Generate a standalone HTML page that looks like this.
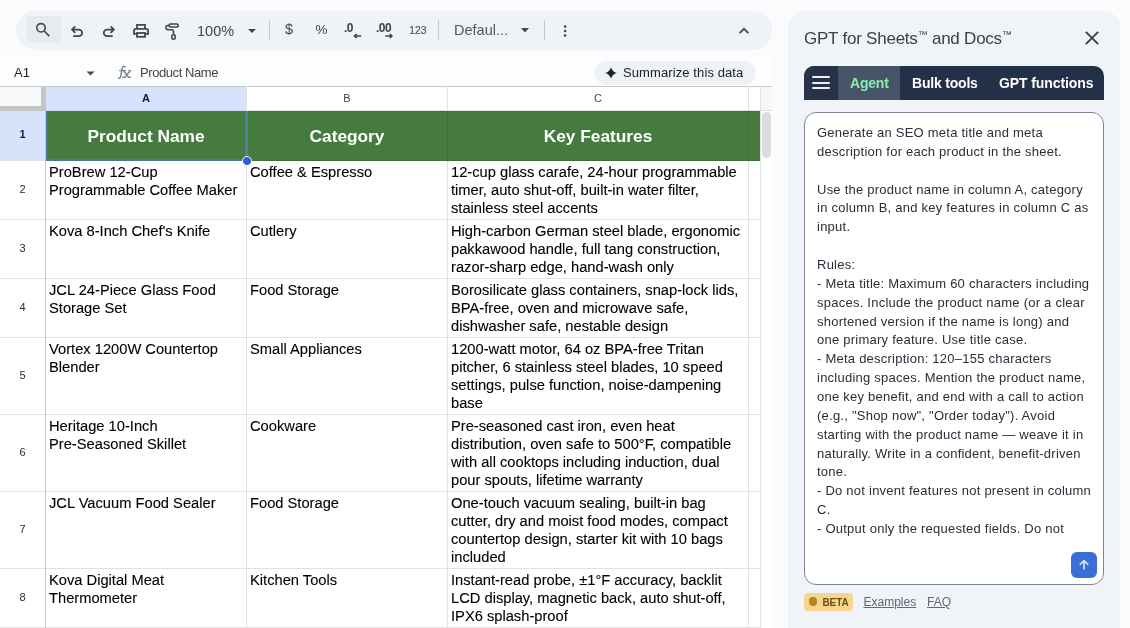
<!DOCTYPE html>
<html><head><meta charset="utf-8">
<style>
*{margin:0;padding:0;box-sizing:border-box}
html,body{-webkit-font-smoothing:antialiased;width:1130px;height:628px;overflow:hidden;background:#f9fbfd;font-family:"Liberation Sans",sans-serif;position:relative}
.abs{position:absolute}
#tb{left:16px;top:11px;width:756px;height:39px;border-radius:20px;background:#eff2f6}
#srch{left:27px;top:16px;width:34px;height:27px;background:#e7ebf1;border-radius:4px}
.tt{position:absolute;color:#444746;font-size:15px;line-height:20px;white-space:pre}
.sep{position:absolute;width:1px;background:#c7c7c7;top:20px;height:20px}
#fbar{left:0;top:56px;width:772px;height:30px;background:#fcfdfe}
#chip{left:595px;top:61px;width:161px;height:24px;border-radius:12px;background:#eef1f5}
#grid{left:0;top:86px;width:772px;height:542px;background:#fff;overflow:hidden}
.hl{position:absolute;left:0;height:1px;background:#e1e1e1}
.vl{position:absolute;top:0;width:1px;background:#e1e1e1}
.cell{position:absolute;font-size:14.7px;line-height:18px;color:#000;-webkit-text-stroke:0.1px #000;white-space:pre;padding:2px 0 0 3px}
.rh{position:absolute;left:0;width:45px;font-size:11px;color:#444;text-align:center}
.ch{position:absolute;top:1px;height:23px;font-size:11px;color:#444;text-align:center;line-height:23px}
.hdr{position:absolute;top:25px;height:50px;color:#fff;font-weight:bold;font-size:17.3px;text-align:center;line-height:51px}
#sb{left:788px;top:11px;width:332px;height:640px;border-radius:16px;background:#f0f4f9}
#box{left:804px;top:112px;width:300px;height:473px;border:1px solid #7d8494;border-radius:12px;background:#fff}
#txt{left:817px;top:124px;font-size:13px;line-height:18.857px;color:#2a2e39;white-space:pre;letter-spacing:0.24px}

</style></head><body>
<div id="root" style="position:absolute;left:0;top:0;width:1130px;height:628px;will-change:transform">
<div id="tb" class="abs"></div>
<div id="srch" class="abs"></div>
<div class="sep" style="left:269px"></div>
<div class="sep" style="left:438px"></div>
<div class="sep" style="left:544px"></div>
<div class="tt" style="left:197px;top:20.5px;font-size:14.5px">100%</div>
<div class="tt" style="left:285px;top:19px;font-size:14.5px">$</div>
<div class="tt" style="left:315.5px;top:20px;font-size:13.5px">%</div>
<div class="tt" style="left:344px;top:18px;font-size:12px;font-weight:bold;letter-spacing:-0.5px;color:#3c4043">.0</div>
<div class="tt" style="left:376px;top:18px;font-size:12px;font-weight:bold;letter-spacing:-0.5px;color:#3c4043">.00</div>
<div class="tt" style="left:409px;top:20px;font-size:11px;letter-spacing:-0.4px">123</div>
<div class="tt" style="left:454px;top:19.5px;font-size:14.5px;color:#53575b">Defaul...</div>
<svg class="abs" style="left:0;top:0" width="790" height="56" viewBox="0 0 790 56" fill="none" stroke="#444746" stroke-width="1.8" stroke-linecap="butt" stroke-linejoin="miter">
<circle cx="41" cy="27.8" r="4.2" stroke-width="1.6"/>
<path d="M44.2 31 L49.3 36.1" stroke-width="1.6"/>
<path d="M75.2 26.4 L72.1 29.6 L75.2 32.8 M72.1 29.6 H78.8 A3.3 3.3 0 0 1 78.8 36.2 H73.2"/>
<g transform="translate(185.9 0) scale(-1 1)"><path d="M75.2 26.4 L72.1 29.6 L75.2 32.8 M72.1 29.6 H78.8 A3.3 3.3 0 0 1 78.8 36.2 H73.2"/></g>
<path d="M137 28.3 V24.9 H145 V28.3"/>
<path d="M136.9 33.9 H134 V30.3 A2 2 0 0 1 136 28.8 H146 A2 2 0 0 1 148.1 30.3 V33.9 H145.1"/>
<rect x="137" y="33" width="8" height="3.8"/>
<rect x="169" y="24" width="9.3" height="3" rx="1.5" stroke-width="1.6"/>
<path d="M169 25.5 H167.5 A1.6 1.6 0 0 0 165.9 27.1 V28.1 A1.6 1.6 0 0 0 167.5 29.7 H172 A1.5 1.5 0 0 1 173.5 31.2 V34.6" stroke-width="1.6"/>
<rect x="171.8" y="34.8" width="3.4" height="4.3" rx="1.7" stroke-width="1.6"/>
<path d="M739.6 33.2 L744 28.8 L748.4 33.2" stroke-width="1.8"/>
<path d="M248 29 H256 L252 33 Z" fill="#444746" stroke="none"/>
<path d="M521 28 H529 L525 32.5 Z" fill="#444746" stroke="none"/>
<circle cx="565.1" cy="26.5" r="1.3" fill="#444746" stroke="none"/>
<circle cx="565.1" cy="31" r="1.3" fill="#444746" stroke="none"/>
<circle cx="565.1" cy="35.5" r="1.3" fill="#444746" stroke="none"/>
<path d="M355 36 H361.2 M356.6 34 L354.4 36 L356.6 38" stroke-width="1.6"/>
<path d="M385.3 36 H391.6 M389.7 34 L391.9 36 L389.7 38" stroke-width="1.6"/>
</svg>
<div id="fbar" class="abs"></div>
<svg class="abs" style="left:86px;top:71px" width="9" height="5" viewBox="0 0 9 5"><path d="M0.5 0.5 H8.5 L4.5 4.6 Z" fill="#444746"/></svg>
<div class="tt" style="left:14px;top:62.5px;font-size:13px;color:#1f1f1f">A1</div>
<svg class="abs" style="left:110px;top:60px" width="26" height="24" viewBox="110 60 26 24" fill="none" stroke="#80868b"><path d="M125.4 67.6 Q124.8 66 123.4 66.4 Q122.3 66.9 121.9 69.4 L120.7 76.4 Q120.3 78.7 117.9 78.2" stroke-width="1.5"/><path d="M119.2 70.5 H125.9" stroke-width="1.3"/><path d="M123.3 70.5 L128.9 77.4 M130.4 70.5 L124.6 77.4" stroke-width="1.5"/><path d="M122.4 70.5 H125.4 M128.4 70.5 H131.1 M122.2 77.4 H125.4 M127.7 77.4 H131" stroke-width="1.2"/></svg>
<div class="tt" style="left:140px;top:63px;font-size:13px;letter-spacing:-0.42px;color:#444746">Product Name</div>
<div id="chip" class="abs"></div>
<svg class="abs" style="left:604px;top:66px" width="14" height="14" viewBox="0 0 14 14"><path d="M7 1.2 Q8.2 5.8 12.8 7 Q8.2 8.2 7 12.8 Q5.8 8.2 1.2 7 Q5.8 5.8 7 1.2Z" fill="#1f1f1f"/></svg>
<div class="tt" style="left:623px;top:63px;font-size:13px;letter-spacing:0.1px;color:#1f1f1f">Summarize this data</div>

<div id="grid" class="abs">
<div class="abs" style="left:0;top:1px;width:41px;height:19px;background:#f8f9fa"></div>
<div class="abs" style="left:41px;top:0;width:4px;height:24px;background:#c4c7c5"></div>
<div class="abs" style="left:0;top:20px;width:45px;height:4px;background:#c4c7c5"></div>
<div class="abs" style="left:46px;top:1px;width:200px;height:23px;background:#d7e2fb"></div>
<div class="abs" style="left:0;top:25px;width:45px;height:49px;background:#d7e2fb"></div>
<div class="abs" style="left:46px;top:25px;width:714px;height:50px;background:#457b3f"></div>
<div class="hl" style="top:0;width:772px;background:#c7c7c7"></div>
<div class="hl" style="top:74px;width:45px"></div>
<div class="hl" style="top:133px;width:760px"></div>
<div class="hl" style="top:192px;width:760px"></div>
<div class="hl" style="top:251px;width:760px"></div>
<div class="hl" style="top:328px;width:760px"></div>
<div class="hl" style="top:405px;width:760px"></div>
<div class="hl" style="top:482px;width:760px"></div>
<div class="hl" style="top:541px;width:760px"></div>
<div class="hl" style="top:74px;left:46px;width:714px;background:#3c6e37"></div>
<div class="hl" style="top:24px;left:0;width:46px;background:#c4c7c5"></div>
<div class="hl" style="top:24px;left:46px;width:200px;background:#c9d9f7"></div>
<div class="hl" style="top:24px;left:246px;width:514px;background:#e3e9e2"></div>
<div class="hl" style="top:25px;left:46px;width:714px;background:#3f6d3b"></div>
<div class="vl" style="left:246px;height:542px"></div>
<div class="vl" style="left:447px;height:542px"></div>
<div class="vl" style="left:748px;height:542px"></div>
<div class="vl" style="left:760px;height:542px"></div>
<div class="vl" style="left:45px;height:542px;background:#c7c7c7"></div>
<div class="abs" style="left:246px;top:25px;width:1px;height:50px;background:#3c6e37"></div>
<div class="abs" style="left:447px;top:25px;width:1px;height:50px;background:#3c6e37"></div>
<div class="abs" style="left:748px;top:25px;width:1px;height:50px;background:#3c6e37"></div>
<div class="abs" style="left:761px;top:1px;width:11px;height:23px;background:#f6f7f8"></div>
<div class="hl" style="top:24px;left:760px;width:12px;background:#dcdcdc"></div>
<div class="abs" style="left:761px;top:25px;width:11px;height:520px;background:#fff"></div>
<div class="abs" style="left:762px;top:26px;width:9px;height:46px;border-radius:5px;background:#dadce0"></div>
<div class="ch" style="left:46px;width:200px;color:#041e49;font-weight:bold">A</div>
<div class="ch" style="left:247px;width:200px;color:#444746;font-weight:normal">B</div>
<div class="ch" style="left:448px;width:300px;color:#444746;font-weight:normal">C</div>
<div class="rh" style="top:24px;height:49px;line-height:49px;color:#041e49;font-weight:bold">1</div>
<div class="rh" style="top:74px;height:58px;line-height:58px;color:#2a2a2a;font-weight:normal">2</div>
<div class="rh" style="top:133px;height:58px;line-height:58px;color:#2a2a2a;font-weight:normal">3</div>
<div class="rh" style="top:192px;height:58px;line-height:58px;color:#2a2a2a;font-weight:normal">4</div>
<div class="rh" style="top:251px;height:76px;line-height:76px;color:#2a2a2a;font-weight:normal">5</div>
<div class="rh" style="top:328px;height:76px;line-height:76px;color:#2a2a2a;font-weight:normal">6</div>
<div class="rh" style="top:405px;height:76px;line-height:76px;color:#2a2a2a;font-weight:normal">7</div>
<div class="rh" style="top:482px;height:58px;line-height:58px;color:#2a2a2a;font-weight:normal">8</div>
<div class="hdr" style="left:46px;width:200px;background:transparent">Product Name</div>
<div class="hdr" style="left:247px;width:200px;background:transparent">Category</div>
<div class="hdr" style="left:448px;width:300px;background:transparent">Key Features</div>
<div class="cell" style="left:46px;top:75px">ProBrew 12-Cup
Programmable Coffee Maker</div>
<div class="cell" style="left:247px;top:75px">Coffee &amp; Espresso</div>
<div class="cell" style="left:448px;top:75px">12-cup glass carafe, 24-hour programmable
timer, auto shut-off, built-in water filter,
stainless steel accents</div>
<div class="cell" style="left:46px;top:134px">Kova 8-Inch Chef&#x27;s Knife</div>
<div class="cell" style="left:247px;top:134px">Cutlery</div>
<div class="cell" style="left:448px;top:134px">High-carbon German steel blade, ergonomic
pakkawood handle, full tang construction,
razor-sharp edge, hand-wash only</div>
<div class="cell" style="left:46px;top:193px">JCL 24-Piece Glass Food
Storage Set</div>
<div class="cell" style="left:247px;top:193px">Food Storage</div>
<div class="cell" style="left:448px;top:193px">Borosilicate glass containers, snap-lock lids,
BPA-free, oven and microwave safe,
dishwasher safe, nestable design</div>
<div class="cell" style="left:46px;top:252px">Vortex 1200W Countertop
Blender</div>
<div class="cell" style="left:247px;top:252px">Small Appliances</div>
<div class="cell" style="left:448px;top:252px">1200-watt motor, 64 oz BPA-free Tritan
pitcher, 6 stainless steel blades, 10 speed
settings, pulse function, noise-dampening
base</div>
<div class="cell" style="left:46px;top:329px">Heritage 10-Inch
Pre-Seasoned Skillet</div>
<div class="cell" style="left:247px;top:329px">Cookware</div>
<div class="cell" style="left:448px;top:329px">Pre-seasoned cast iron, even heat
distribution, oven safe to 500°F, compatible
with all cooktops including induction, dual
pour spouts, lifetime warranty</div>
<div class="cell" style="left:46px;top:406px">JCL Vacuum Food Sealer</div>
<div class="cell" style="left:247px;top:406px">Food Storage</div>
<div class="cell" style="left:448px;top:406px">One-touch vacuum sealing, built-in bag
cutter, dry and moist food modes, compact
countertop design, starter kit with 10 bags
included</div>
<div class="cell" style="left:46px;top:483px">Kova Digital Meat
Thermometer</div>
<div class="cell" style="left:247px;top:483px">Kitchen Tools</div>
<div class="cell" style="left:448px;top:483px">Instant-read probe, ±1°F accuracy, backlit
LCD display, magnetic back, auto shut-off,
IPX6 splash-proof</div>
<div class="abs" style="left:46px;top:25px;width:2px;height:50px;background:#46789a"></div><div class="abs" style="left:46px;top:25px;width:201px;height:1px;background:#4a6f95"></div><div class="abs" style="left:244.5px;top:25px;width:3px;height:50px;background:#4f7d9e"></div><div class="abs" style="left:46px;top:73px;width:201px;height:2px;background:#4d74a6"></div>
<div class="abs" style="left:242px;top:70px;width:10px;height:10px;border-radius:50%;background:#2b5fd0;border:1px solid #fff"></div>

</div>
<div id="sb" class="abs"></div>
<div class="abs" style="left:804px;top:25px;font-size:17px;line-height:20px;color:#3c4043;letter-spacing:-0.23px;white-space:pre">GPT for Sheets<span style="font-size:10px;vertical-align:6px">™</span> and Docs<span style="font-size:10px;vertical-align:6px">™</span></div>
<svg class="abs" style="left:1082px;top:28px" width="20" height="20" viewBox="0 0 20 20"><path d="M3.8 3.8 L16.2 16.2 M16.2 3.8 L3.8 16.2" stroke="#3c4043" stroke-width="1.9"/></svg>
<div class="abs" style="left:804px;top:66px;width:300px;height:34px;border-radius:10px 10px 0 0;background:#243048;overflow:hidden"><div class="abs" style="left:0;top:0;width:34px;height:34px;background:#273349"></div><div class="abs" style="left:34px;top:0;width:62px;height:34px;background:#475369"></div></div>
<div class="abs" style="left:812px;top:76.4px;width:18px;height:2px;background:#eef0f4;border-radius:1px"></div>
<div class="abs" style="left:812px;top:82.0px;width:18px;height:2px;background:#eef0f4;border-radius:1px"></div>
<div class="abs" style="left:812px;top:87.3px;width:18px;height:2px;background:#eef0f4;border-radius:1px"></div>
<div class="abs" style="left:850px;top:74px;font-size:14px;line-height:18px;font-weight:bold;color:#86efac;letter-spacing:-0.2px">Agent</div>
<div class="abs" style="left:912px;top:74px;font-size:14px;line-height:18px;font-weight:bold;color:#fff;letter-spacing:-0.2px">Bulk tools</div>
<div class="abs" style="left:999px;top:74px;font-size:14px;line-height:18px;font-weight:bold;color:#fff;letter-spacing:-0.1px">GPT functions</div>
<div id="box" class="abs"></div>
<div id="txt" class="abs">Generate an SEO meta title and meta
description for each product in the sheet.

Use the product name in column A, category
in column B, and key features in column C as
input.

Rules:
- Meta title: Maximum 60 characters including
spaces. Include the product name (or a clear
shortened version if the name is long) and
one primary feature. Use title case.
- Meta description: 120–155 characters
including spaces. Mention the product name,
one key benefit, and end with a call to action
(e.g., "Shop now", "Order today"). Avoid
starting with the product name — weave it in
naturally. Write in a confident, benefit-driven
tone.
- Do not invent features not present in column
C.
- Output only the requested fields. Do not</div>
<div class="abs" style="left:1071px;top:552px;width:26px;height:26px;border-radius:6px;background:#3a6fd8"></div>
<svg class="abs" style="left:1071px;top:552px" width="26" height="26" viewBox="0 0 26 26" fill="none" stroke="#dfe8fb" stroke-width="1.6"><path d="M13 17.5 V8.8 M8.8 12.8 L13 8.6 L17.2 12.8"/></svg>
<div class="abs" style="left:804px;top:593px;width:49px;height:18px;border-radius:4px;background:#f6d58f"></div>
<div class="abs" style="left:808.5px;top:597.2px;width:8.6px;height:8.6px;border-radius:50%;background:#b8861f"></div>
<div class="abs" style="left:822.5px;top:596.5px;font-size:10px;line-height:12px;font-weight:bold;letter-spacing:-0.1px;color:#6b4f12">BETA</div>
<div class="abs" style="left:863.5px;top:595px;font-size:12px;line-height:15px;color:#5f6778;text-decoration:underline">Examples</div>
<div class="abs" style="left:927px;top:595px;font-size:12px;line-height:15px;color:#5f6778;text-decoration:underline">FAQ</div>

</div>
</body></html>
